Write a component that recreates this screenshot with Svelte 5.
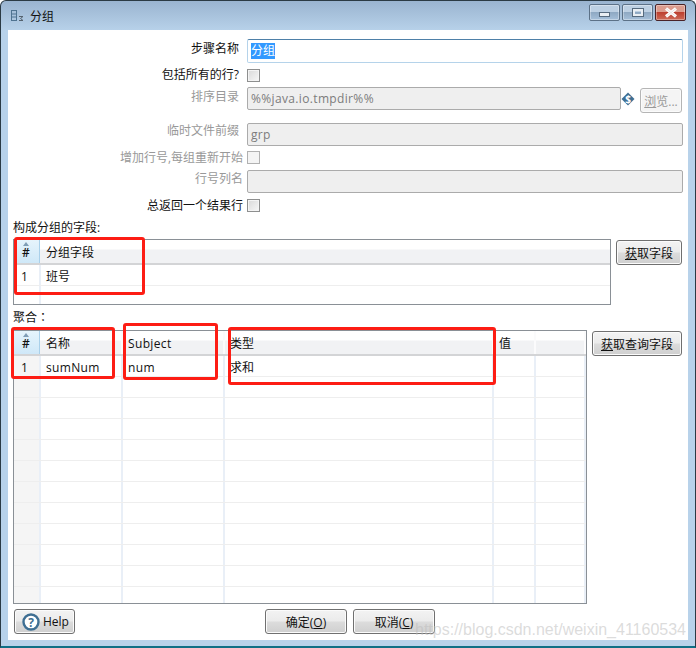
<script>
  const groupColumns = [
    { title: '分组字段', width: 571 }
  ];
  const groupRows = [['1', '班号'], ['', '']];

  const aggColumns = [
    { title: '名称', width: 82 },
    { title: 'Subject', width: 102 },
    { title: '类型', width: 269 },
    { title: '值', width: 42 },
    { title: '', width: 50 }
  ];
  const aggRows = [
    ['1', 'sumNum', 'num', '求和', '', ''],
    ...Array.from({ length: 11 }, () => ['', '', '', '', '', ''])
  ];

  const template = (cols) => '27px ' + cols.map((c) => c.width + 'px').join(' ');
  const isLatin = (text) => /^[A-Za-z]+$/.test(text);
</script>

<div class="window">
  <div class="titlebar">
    <svg class="app-icon" width="14" height="14" viewBox="0 0 14 14">
      <rect x="0.5" y="1.5" width="5" height="10" fill="none" stroke="#4f7391" />
      <path d="M1 5h4M1 8h4" stroke="#4f7391" />
      <path d="M8 7.5h4l-2.5 2 2.5 2H8" fill="none" stroke="#55626e" />
    </svg>
    <span class="title">分组</span>
    <div class="controls">
      <div class="ctl"><span class="min-glyph"></span></div>
      <div class="ctl"><span class="max-glyph"></span></div>
      <div class="ctl close">
        <svg width="16" height="11" viewBox="0 0 16 11">
          <path d="M3 1.5l10 8M13 1.5l-10 8" stroke="#fff" stroke-width="3.2" />
          <path d="M3 1.5l10 8M13 1.5l-10 8" stroke="#e9e3e0" stroke-width="1" />
        </svg>
      </div>
    </div>
  </div>

  <div class="content">
    <div class="form">
      <div class="row r1">
        <span class="label up inset">步骤名称</span>
        <div class="input active"><span class="selected">分组</span></div>
      </div>
      <div class="row r2">
        <span class="label inset">包括所有的行?</span>
        <span class="check"></span>
      </div>
      <div class="row r3">
        <span class="label up off inset">排序目录</span>
        <div class="path">
          <div class="input disabled latin">%%java.io.tmpdir%%</div>
          <svg class="var-icon" width="14" height="14" viewBox="0 0 14 14">
            <path d="M7 0.5L13.5 7L7 13.5L0.5 7Z" fill="#3f6f93" />
            <text x="7" y="10.5" text-anchor="middle" class="var-text">$</text>
          </svg>
          <button class="btn browse" disabled><u>浏</u>览...</button>
        </div>
      </div>
      <div class="row r4">
        <span class="label up off inset">临时文件前缀</span>
        <div class="input disabled latin">grp</div>
      </div>
      <div class="row r5">
        <span class="label off">增加行号,每组重新开始</span>
        <span class="check off-check"></span>
      </div>
      <div class="row r6">
        <span class="label up off">行号列名</span>
        <div class="input disabled"></div>
      </div>
      <div class="row r7">
        <span class="label">总返回一个结果行</span>
        <span class="check"></span>
      </div>
    </div>

    <div class="section-label first">构成分组的字段:</div>
    <div class="table-row">
      <div class="table t1">
        <div class="grid-row head" style="grid-template-columns: {template(groupColumns)}">
          <div class="cell hash"><i class="sort"></i>#</div>
          {#each groupColumns as col}
            <div class="cell">{col.title}</div>
          {/each}
        </div>
        {#each groupRows as row}
          <div class="grid-row" style="grid-template-columns: {template(groupColumns)}">
            {#each row as value, i}
              <div class="cell" class:num={i === 0}>{value}</div>
            {/each}
          </div>
        {/each}
      </div>
      <button class="btn get-fields"><u>获</u>取字段</button>
    </div>

    <div class="section-label second">聚合：</div>
    <div class="table-row">
      <div class="table t2">
        <div class="grid-row head" style="grid-template-columns: {template(aggColumns)}">
          <div class="cell hash"><i class="sort"></i>#</div>
          {#each aggColumns as col}
            <div class="cell" class:latin={isLatin(col.title)}>{col.title}</div>
          {/each}
        </div>
        {#each aggRows as row}
          <div class="grid-row" style="grid-template-columns: {template(aggColumns)}">
            {#each row as value, i}
              <div class="cell" class:num={i === 0} class:latin={isLatin(value)}>{value}</div>
            {/each}
          </div>
        {/each}
      </div>
      <button class="btn get-query"><u>获</u>取查询字段</button>
    </div>

    <div class="footer">
      <button class="btn help">
        <svg width="20" height="20" viewBox="0 0 20 20">
          <circle cx="10" cy="10" r="7.5" fill="#fff" stroke="#3f6f93" stroke-width="2.4" />
          <text x="10" y="14.5" text-anchor="middle" class="help-mark">?</text>
        </svg>
        Help
      </button>
      <button class="btn ok">确定(<u>O</u>)</button>
      <button class="btn cancel">取消(<u>C</u>)</button>
    </div>
  </div>

  <!-- annotations drawn over the screenshot -->
  <div class="mark m1"></div>
  <div class="mark m2"></div>
  <div class="mark m3"></div>
  <div class="mark m4"></div>
  <div class="watermark">https://blog.csdn.net/weixin_41160534</div>
</div>

<style>
  :global(body) {
    margin: 0;
    background: #fff;
  }

  .window {
    position: relative;
    width: 696px;
    height: 648px;
    box-sizing: border-box;
    border: 1px solid #2b3a44;
    border-bottom: 2px solid #0f6f86;
    border-radius: 6px 6px 0 0;
    padding: 0 7px 6px;
    display: flex;
    flex-direction: column;
    overflow: hidden;
    background: #b8d2ea linear-gradient(#9ab4d0, #b8d2ea) no-repeat 0 0 / 100% 30px;
    font-family: "Open Sans", "Noto Sans CJK SC", sans-serif;
    font-size: 12px;
    color: #111;
  }

  .titlebar {
    height: 29px;
    display: flex;
    align-items: center;
    flex-shrink: 0;
  }

  .app-icon {
    margin: 1px 0 0 3px;
  }

  .title {
    margin-left: 5px;
    font-size: 12px;
    color: #111;
    font-family: "Noto Sans CJK SC", sans-serif;
  }

  .controls {
    margin-left: auto;
    margin-right: 2px;
    margin-bottom: 6px;
    display: flex;
    gap: 2px;
  }

  .ctl {
    width: 29px;
    height: 15px;
    border: 1px solid #5c7187;
    border-radius: 2px;
    display: flex;
    align-items: center;
    justify-content: center;
    background: linear-gradient(#bdd0e3 0 45%, #8fa9c3 50%, #a6c0da 100%);
    box-shadow: inset 0 0 0 1px rgba(255, 255, 255, 0.35);
  }

  .close {
    border-color: #4a2328;
    background: linear-gradient(#dc9c8e 0 45%, #bd4030 50%, #cd6b58 100%);
  }

  .min-glyph {
    width: 9px;
    height: 3px;
    margin-top: 4px;
    background: #e9eef3;
    border: 1px solid #566a7e;
  }

  .max-glyph {
    width: 6px;
    height: 3px;
    border: 2px solid #e9eef3;
    outline: 1px solid #566a7e;
  }

  .content {
    flex: 1;
    background: #fff;
    display: flex;
    flex-direction: column;
  }

  .form {
    padding: 9px 5px 0 0;
  }

  .row {
    display: grid;
    grid-template-columns: 235px 1fr;
    column-gap: 4px;
    align-items: center;
  }

  .r1 { height: 24px; }
  .r2 { height: 24px; }
  .r3 { height: 35px; align-items: start; }
  .r4 { height: 24px; }
  .r5 { height: 23px; }
  .r6 { height: 24px; }
  .r7 { height: 25px; }

  .label {
    text-align: right;
    white-space: nowrap;
    line-height: 18px;
  }

  .inset {
    padding-right: 4px;
  }

  .up {
    align-self: start;
    padding-top: 1px;
  }

  .r4 .up {
    padding-top: 0;
  }

  .off {
    color: #999;
  }

  .latin {
    letter-spacing: 0.35px;
  }

  .input {
    box-sizing: border-box;
    height: 23px;
    line-height: 21px;
    padding: 0 3px;
    border: 1px solid #ababab;
    border-radius: 2px;
  }

  .active {
    height: 24px;
    line-height: 22px;
    border-color: #4e80a8 #b5d3ea #b5d3ea #b5d3ea;
    border-width: 1px;
  }

  .selected {
    display: inline-block;
    height: 16px;
    line-height: 16px;
    background: #3399ff;
    color: #fff;
    vertical-align: middle;
    margin-top: -2px;
  }

  .disabled {
    background: #efefef;
    color: #7c7c7c;
  }

  .check {
    box-sizing: border-box;
    width: 13px;
    height: 13px;
    border: 1px solid #8e8f8f;
    background: linear-gradient(135deg, #d9d9d9, #f7f7f7);
    box-shadow: inset 0 0 0 1px #f4f4f4;
  }

  .off-check {
    border-color: #b1b1b1;
    background: #f4f4f4;
  }

  .path {
    display: flex;
    align-items: flex-start;
  }

  .path .input {
    width: 374px;
  }

  .var-icon {
    margin: 5px 5px 0 0;
    flex-shrink: 0;
  }

  .var-text {
    font-size: 10px;
    font-weight: 700;
    fill: #fff;
  }

  .btn {
    box-sizing: border-box;
    padding: 0;
    height: 25px;
    font: inherit;
    color: #111;
    border: 1px solid #707070;
    border-radius: 3px;
    background: linear-gradient(#f3f3f3 0, #ebebeb 48%, #dcdcdc 52%, #cfcfcf 100%);
    box-shadow: inset 0 0 0 1px #fbfbfb;
    text-align: center;
  }

  .browse {
    width: 42px;
    margin-top: 1px;
    color: #999;
    border-color: #b5b5b5;
    background: #f4f4f4;
  }

  .section-label {
    padding-left: 5px;
    line-height: 18px;
  }

  .first {
    height: 21px;
    padding-top: 1px;
    box-sizing: border-box;
  }

  .second {
    height: 25px;
    padding-top: 4px;
    box-sizing: border-box;
    font-family: "Open Sans", "Noto Sans CJK TC", sans-serif;
  }

  .table-row {
    display: flex;
    align-items: flex-start;
    padding-left: 5px;
  }

  .table {
    box-sizing: border-box;
    border: 1px solid #8a9096;
    overflow: hidden;
    flex-shrink: 0;
  }

  .t1 {
    width: 598px;
    height: 66px;
  }

  .t2 {
    width: 574px;
    height: 274px;
  }

  .grid-row {
    display: grid;
    height: 21px;
    box-sizing: border-box;
    border-bottom: 1px solid #eeeeee;
  }

  .head {
    height: 25px;
    border-bottom: 2px solid #d3d4d6;
    background: linear-gradient(#fff 0 9px, #f1f2f4 10px);
  }

  .cell {
    box-sizing: border-box;
    padding-left: 5px;
    line-height: 23px;
    white-space: nowrap;
    overflow: hidden;
    border-right: 2px solid #e9eff7;
  }

  .head .cell {
    line-height: 26px;
    border-right-color: #fbfbfc;
  }

  .head .hash {
    position: relative;
    margin-right: 1px;
    padding-left: 8px;
    font-weight: 600;
    background: linear-gradient(#e6f4fc, #cfe8f8);
    border-right: 1px solid #a9d0ea;
  }

  .sort {
    position: absolute;
    left: 9px;
    top: 2px;
    width: 0;
    height: 0;
    border: 3px solid transparent;
    border-top: 0;
    border-bottom: 4px solid #7f9db5;
  }

  .num {
    padding-left: 7px;
  }

  .t2 .grid-row:not(.head) .num {
    background: #f5f5f5;
  }

  .get-fields {
    width: 66px;
    margin: 1px 0 0 5px;
  }

  .get-query {
    width: 90px;
    margin: 1px 0 0 5px;
  }

  .footer {
    display: flex;
    align-items: flex-start;
    padding: 5px 0 0 6px;
  }

  .help {
    width: 61px;
    display: flex;
    align-items: center;
    padding-left: 6px;
    gap: 2px;
  }

  .help-mark {
    font-size: 12px;
    font-weight: 700;
    fill: #3f6f93;
  }

  .ok {
    width: 82px;
    margin-left: 190px;
  }

  .cancel {
    width: 82px;
    margin-left: 6px;
  }

  .mark {
    position: absolute;
    box-sizing: border-box;
    border: 3px solid #fd1d14;
    border-radius: 3px;
  }

  .m1 { left: 13px; top: 236px; width: 131px; height: 58px; }
  .m2 { left: 10px; top: 326px; width: 104px; height: 52px; }
  .m3 { left: 122px; top: 322px; width: 95px; height: 57px; }
  .m4 { left: 227px; top: 326px; width: 268px; height: 58px; }

  .watermark {
    position: absolute;
    left: 414px;
    top: 618px;
    font-family: "Liberation Sans", sans-serif;
    font-size: 16px;
    line-height: 22px;
    white-space: nowrap;
    color: rgba(190, 190, 190, 0.55);
  }
</style>
